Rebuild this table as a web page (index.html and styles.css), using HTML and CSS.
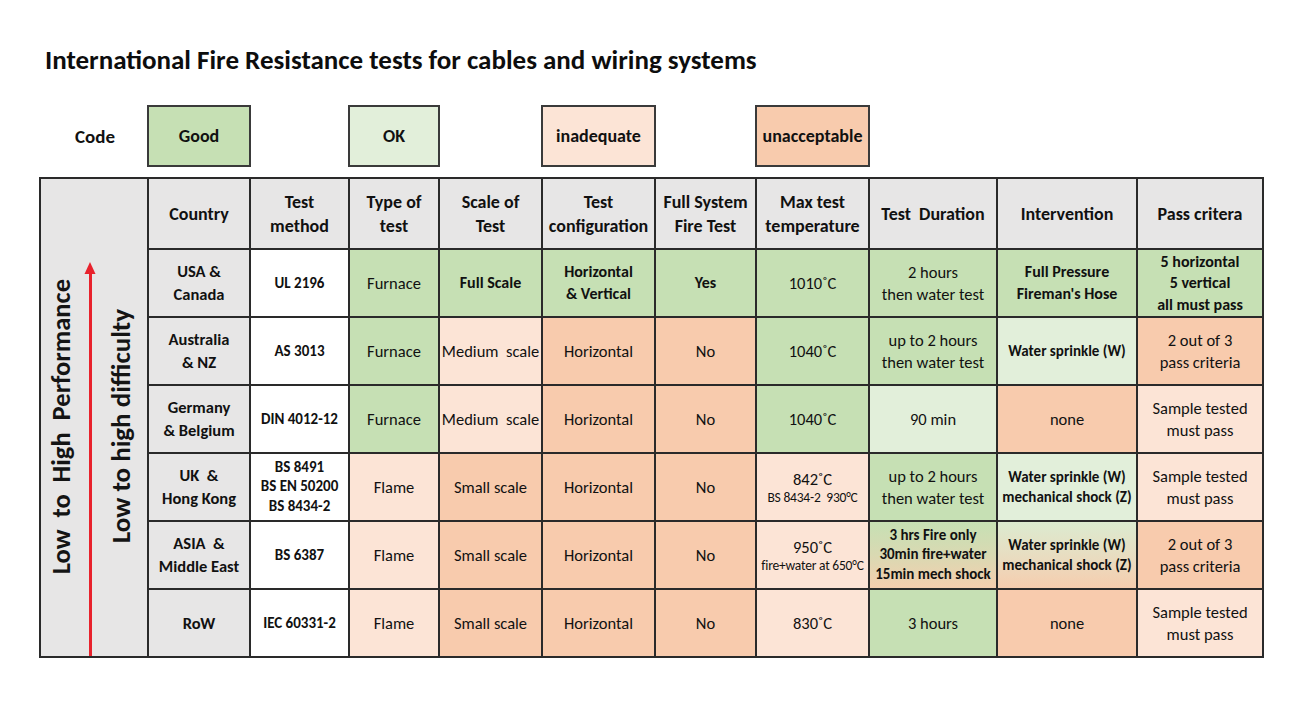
FILE: index.html
```html
<!DOCTYPE html>
<html lang="en">
<head>
<meta charset="utf-8">
<title>International Fire Resistance tests</title>
<link rel="stylesheet" href="styles.css">
</head>
<body>
<main class="page">
  <h1 class="title">International Fire Resistance tests for cables and wiring systems</h1>

  <div class="legend">
    <div class="legend-label">Code</div>
    <div class="key good c2">Good</div>
    <div class="key ok c4">OK</div>
    <div class="key inad c6">inadequate</div>
    <div class="key unacc c8">unacceptable</div>
  </div>

  <div class="table">
    <div class="side">
      <div class="side-text perf">Low&nbsp; to&nbsp; High&nbsp; Performance</div>
      <div class="arrow">
        <svg class="arrow-head" width="12" height="12" viewBox="0 0 12 12"><polygon points="6,0 11.5,12 0.5,12" fill="#e8222c"/></svg>
        <div class="arrow-shaft"></div>
      </div>
      <div class="side-text diff">Low to high difficulty</div>
    </div>

    <div class="cell head">Country</div>
    <div class="cell head">Test<br>method</div>
    <div class="cell head">Type of<br>test</div>
    <div class="cell head">Scale of<br>Test</div>
    <div class="cell head">Test<br>configuration</div>
    <div class="cell head">Full System<br>Fire Test</div>
    <div class="cell head">Max test<br>temperature</div>
    <div class="cell head">Test&nbsp; Duration</div>
    <div class="cell head">Intervention</div>
    <div class="cell head">Pass critera</div>

    <!-- USA -->
    <div class="cell country">USA &amp;<br>Canada</div>
    <div class="cell method">UL 2196</div>
    <div class="cell good">Furnace</div>
    <div class="cell good b">Full Scale</div>
    <div class="cell good b">Horizontal<br>&amp; Vertical</div>
    <div class="cell good b">Yes</div>
    <div class="cell good">1010˚C</div>
    <div class="cell good">2 hours<br>then water test</div>
    <div class="cell good b">Full Pressure<br>Fireman's Hose</div>
    <div class="cell good b tight">5 horizontal<br>5 vertical<br>all must pass</div>

    <!-- Australia -->
    <div class="cell country">Australia<br>&amp; NZ</div>
    <div class="cell method">AS 3013</div>
    <div class="cell good">Furnace</div>
    <div class="cell inad">Medium&nbsp; scale</div>
    <div class="cell unacc">Horizontal</div>
    <div class="cell unacc">No</div>
    <div class="cell good">1040˚C</div>
    <div class="cell good">up to 2 hours<br>then water test</div>
    <div class="cell ok sm">Water sprinkle (W)</div>
    <div class="cell unacc">2 out of 3<br>pass criteria</div>

    <!-- Germany -->
    <div class="cell country">Germany<br>&amp; Belgium</div>
    <div class="cell method">DIN 4012-12</div>
    <div class="cell good">Furnace</div>
    <div class="cell inad">Medium&nbsp; scale</div>
    <div class="cell unacc">Horizontal</div>
    <div class="cell unacc">No</div>
    <div class="cell good">1040˚C</div>
    <div class="cell ok">90 min</div>
    <div class="cell unacc">none</div>
    <div class="cell inad">Sample tested<br>must pass</div>

    <!-- UK -->
    <div class="cell country">UK&nbsp; &amp;<br>Hong Kong</div>
    <div class="cell method tight3">BS 8491<br>BS EN 50200<br>BS 8434-2</div>
    <div class="cell inad">Flame</div>
    <div class="cell unacc">Small scale</div>
    <div class="cell unacc">Horizontal</div>
    <div class="cell unacc">No</div>
    <div class="cell inad temp">842˚C<span class="tiny">BS 8434-2&nbsp; 930°C</span></div>
    <div class="cell good">up to 2 hours<br>then water test</div>
    <div class="cell ok sm">Water sprinkle (W)<br>mechanical shock (Z)</div>
    <div class="cell inad">Sample tested<br>must pass</div>

    <!-- Asia -->
    <div class="cell country">ASIA&nbsp; &amp;<br>Middle East</div>
    <div class="cell method">BS 6387</div>
    <div class="cell inad">Flame</div>
    <div class="cell unacc">Small scale</div>
    <div class="cell unacc">Horizontal</div>
    <div class="cell unacc">No</div>
    <div class="cell inad temp">950˚C<span class="tiny">fire+water at 650°C</span></div>
    <div class="cell fade-good sm tight3">3 hrs Fire only<br>30min fire+water<br>15min mech shock</div>
    <div class="cell fade-ok sm">Water sprinkle (W)<br>mechanical shock (Z)</div>
    <div class="cell unacc">2 out of 3<br>pass criteria</div>

    <!-- RoW -->
    <div class="cell country">RoW</div>
    <div class="cell method">IEC 60331-2</div>
    <div class="cell inad">Flame</div>
    <div class="cell unacc">Small scale</div>
    <div class="cell unacc">Horizontal</div>
    <div class="cell unacc">No</div>
    <div class="cell inad">830˚C</div>
    <div class="cell good">3 hours</div>
    <div class="cell unacc">none</div>
    <div class="cell inad">Sample tested<br>must pass</div>
  </div>
</main>
</body>
</html>
```

FILE: styles.css
```css
* { box-sizing: border-box; }

html, body {
  margin: 0;
  padding: 0;
  background: #ffffff;
}

body {
  font-family: Carlito, Calibri, Lato, "Open Sans", sans-serif;
  color: #111111;
  width: 1300px;
  height: 709px;
  overflow: hidden;
}

.page {
  padding: 0 0 0 39px;
}

.title {
  margin: 45px 0 0 6px;
  font-size: 27px;
  line-height: 30px;
  font-weight: 700;
  color: #0d0d0d;
}

/* shared column template for legend + table */
.legend,
.table {
  display: grid;
  grid-template-columns: 106px 100px 97px 88px 101px 111px 99px 111px 126px 138px 124px;
  column-gap: 2px;
}

.legend {
  margin-top: 30px;
  height: 62px;
  padding: 0 2px;
}

.legend-label {
  grid-column: 1;
  display: flex;
  align-items: center;
  justify-content: center;
  font-weight: 700;
  font-size: 19px;
  padding-left: 2px;
}

.key {
  margin: 0 -2px;
  border: 2px solid #3a3a3a;
  display: flex;
  align-items: center;
  justify-content: center;
  font-weight: 700;
  font-size: 18px;
}

.c2 { grid-column: 2; }
.c4 { grid-column: 4; }
.c6 { grid-column: 6; }
.c8 { grid-column: 8; }

.table {
  margin-top: 10px;
  width: max-content;
  grid-template-rows: 69px repeat(6, 66px);
  row-gap: 2px;
  padding: 2px;
  background: #2a2a2a;
}

.side {
  grid-column: 1;
  grid-row: 1 / span 7;
  background: #e7e6e6;
  display: flex;
  align-items: center;
  padding: 18px 0 0 5px;
}

.side-text {
  writing-mode: vertical-rl;
  transform: rotate(180deg);
  line-height: 30px;
  font-weight: 700;
  white-space: nowrap;
  color: #141414;
}

.side-text.perf { font-size: 26.5px; }
.side-text.diff { font-size: 27px; }

.arrow {
  align-self: stretch;
  margin: 65px 10px 0 8px;
  width: 12px;
  display: flex;
  flex-direction: column;
  align-items: center;
}

.arrow-head {
  display: block;
  flex: none;
}

.arrow-shaft {
  flex: 1;
  width: 3px;
  background: #e8222c;
}

.cell {
  display: flex;
  align-items: center;
  justify-content: center;
  flex-direction: column;
  text-align: center;
  font-size: 16.5px;
  line-height: 22px;
  background: #ffffff;
  white-space: nowrap;
}

.head {
  background: #e7e6e6;
  font-weight: 700;
  font-size: 18px;
  line-height: 24px;
}

.country {
  background: #e7e6e6;
  font-weight: 700;
  font-size: 16.5px;
  line-height: 23px;
}

.method {
  background: #ffffff;
  font-weight: 700;
  font-size: 15px;
}

.b { font-weight: 700; font-size: 16px; }

.sm {
  font-size: 15px;
  font-weight: 700;
  line-height: 20px;
}

.tight { line-height: 21.5px; }
.tight3 { line-height: 19.5px; }

.temp { line-height: 20px; }

.tiny {
  display: block;
  font-size: 13.5px;
  line-height: 17px;
  letter-spacing: -0.2px;
}

.good  { background: #c6e0b4; }
.ok    { background: #e2efda; }
.inad  { background: #fce4d6; }
.unacc { background: #f8cbad; }

.fade-good { background: linear-gradient(#c6e0b4 0%, #d9d9b2 50%, #f5ceae 100%); }
.fade-ok   { background: linear-gradient(#dcebd0 0%, #e9dcc0 55%, #f6cdae 100%); }
```
